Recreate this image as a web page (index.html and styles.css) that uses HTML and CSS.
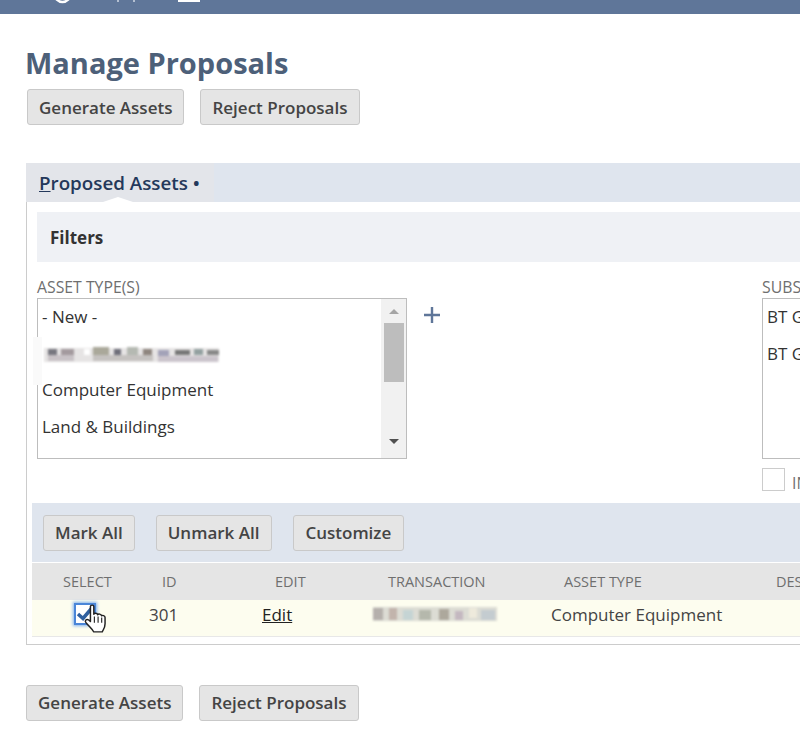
FILE: index.html
```html
<!DOCTYPE html>
<html lang="en">
<head>
    <meta charset="UTF-8">
    <meta name="viewport" content="width=device-width, initial-scale=1.0">
    <title>Manage Proposals</title>
    <link rel="stylesheet" href="styles.css">
</head>
<body>
<div class="topbar">
    <svg class="topbar-icons" width="160" height="14" viewBox="0 0 160 14">
        <circle cx="22.500" cy="-6" r="8" fill="none" stroke="#fff" stroke-width="2.500"/>
        <path d="M78 -2V2M94 -2V2" stroke="#cfd8e4" stroke-width="1.500" fill="none"/>
        <rect x="138" y="-8" width="22" height="10" fill="#fff"/>
    </svg>
</div>

<div class="page">
    <h1>Manage Proposals</h1>
    <div class="btn-row">
        <button class="btn">Generate Assets</button>
        <button class="btn">Reject Proposals</button>
    </div>

    <div class="tabs">
        <div class="tab"><u>P</u>roposed Assets •</div>
    </div>

    <div class="panel">
        <div class="filters-title">Filters</div>

        <div class="filters">
            <div class="field">
                <label>ASSET TYPE(S)</label>
                <div class="field-row">
                    <div class="listbox">
                        <div class="option">- New -</div>
                        <div class="option">
                            <!-- blurred out in the original -->
                            <svg class="mosaic" width="188" height="18" viewBox="0 0 184 18" shape-rendering="crispEdges">
                                <rect x="5" y="2" width="175" height="14" fill="#e6e4e4"/>
                                <rect x="9" y="3" width="9" height="6" fill="#77777f"/>
                                <rect x="22" y="3" width="13" height="6" fill="#a39a9e"/>
                                <rect x="45" y="3" width="6" height="6" fill="#fff"/>
                                <rect x="54" y="1" width="16" height="8" fill="#aaa89a"/>
                                <rect x="75" y="3" width="7" height="6" fill="#6f6f7a"/>
                                <rect x="88" y="1" width="11" height="8" fill="#b5b9b2"/>
                                <rect x="104" y="3" width="9" height="6" fill="#8f867f"/>
                                <rect x="119" y="4" width="11" height="7" fill="#a3a2b8"/>
                                <rect x="136" y="4" width="15" height="5" fill="#777"/>
                                <rect x="155" y="3" width="9" height="6" fill="#93a0a0"/>
                                <rect x="168" y="4" width="12" height="5" fill="#888"/>
                                <rect x="9" y="9" width="26" height="6" fill="#c8c2c6"/>
                                <rect x="54" y="9" width="60" height="6" fill="#c5c2c0"/>
                                <rect x="119" y="10" width="60" height="6" fill="#cbc4cc"/>
                            </svg>
                        </div>
                        <div class="option">Computer Equipment</div>
                        <div class="option">Land &amp; Buildings</div>
                        <div class="option">Leasehold</div>
                        <div class="scrollbar">
                            <span class="arrow-up"></span>
                            <span class="thumb"></span>
                            <span class="arrow-down"></span>
                        </div>
                    </div>
                    <svg class="plus" width="18" height="18" viewBox="0 0 18 18">
                        <path d="M9 1V17M1 9H17" stroke="#5f7699" stroke-width="2.400"/>
                    </svg>
                    <span class="smudge"></span>
                </div>
            </div>

            <div class="field field-subs">
                <label>SUBSIDIARY</label>
                <div class="listbox listbox-subs">
                    <div class="option">BT Global</div>
                    <div class="option">BT Global</div>
                </div>
                <div class="include">
                    <span class="checkbox"></span>
                    <span class="include-label">INCLUDE CHILDREN</span>
                </div>
            </div>
        </div>

        <div class="list-bar">
            <button class="btn">Mark All</button>
            <button class="btn">Unmark All</button>
            <button class="btn">Customize</button>
        </div>

        <div class="grid grid-head">
            <div class="col-select">SELECT</div>
            <div class="col-id">ID</div>
            <div class="col-edit">EDIT</div>
            <div class="col-trans">TRANSACTION</div>
            <div class="col-type">ASSET TYPE</div>
            <div class="col-desc">DESCRIPTION</div>
        </div>
        <div class="grid grid-row">
            <div class="col-select">
                <span class="select-box">
                    <svg width="18" height="15" viewBox="0 0 18 15">
                        <path d="M2 8L7 12.500L15.500 2.500" fill="none" stroke="#2f5f9f" stroke-width="3.500"/>
                    </svg>
                    <svg class="hand" width="27" height="31" viewBox="0 0 24 30" preserveAspectRatio="none">
                        <path d="M7.500 3.500C7.500 1.500 10.500 1.500 10.500 3.500V11C11 9.500 13.500 9.500 14 11.500C14.500 10 17 10.500 17.500 12.500C18 11.500 20.500 12 20.500 14V20C20.500 24 19 25.500 18 28H10.500C9 25 6.500 23 3.500 19C2 17 4 15 6 16.500L7.500 18Z" fill="#fff" stroke="#222" stroke-width="1.300" stroke-linejoin="round"/>
                        <path d="M11 13V19M14.300 13V19M17.500 14V19" stroke="#222" stroke-width="1" fill="none"/>
                    </svg>
                </span>
            </div>
            <div class="col-id">301</div>
            <div class="col-edit"><a href="#">Edit</a></div>
            <div class="col-trans">
                <svg class="mosaic" width="124" height="18" viewBox="0 0 124 18" shape-rendering="crispEdges">
                    <rect x="0" y="2" width="124" height="14" fill="#dcdcd4"/>
                    <rect x="0" y="3" width="10" height="12" fill="#b5b0ac"/>
                    <rect x="16" y="3" width="8" height="12" fill="#c2b4ac"/>
                    <rect x="30" y="5" width="10" height="10" fill="#c5d4d4"/>
                    <rect x="46" y="5" width="12" height="10" fill="#b5b8ac"/>
                    <rect x="66" y="4" width="10" height="11" fill="#ada89c"/>
                    <rect x="82" y="6" width="8" height="9" fill="#c4b8c0"/>
                    <rect x="96" y="3" width="8" height="10" fill="#eeeadc"/>
                    <rect x="108" y="5" width="14" height="10" fill="#c4ccd0"/>
                </svg>
            </div>
            <div class="col-type">Computer Equipment</div>
            <div class="col-desc"></div>
        </div>
    </div>

    <div class="btn-row btn-row-bottom">
        <button class="btn">Generate Assets</button>
        <button class="btn">Reject Proposals</button>
    </div>
</div>
</body>
</html>
```

FILE: styles.css
```css
html, body {
    margin: 0;
    padding: 0;
    height: 755px;
    overflow: hidden;
    background: #fff;
}
body {
    font-family: "Open Sans", sans-serif;
    font-size: 17px;
    color: #333;
}
.topbar {
    height: 14px;
    background: #5f7699;
    padding-left: 40px;
}
.topbar-icons {
    display: block;
}
.page {
    padding-left: 26px;
    width: 774px;
}
h1 {
    margin: 0 0 0 -1px;
    padding-top: 30px;
    font-size: 29px;
    line-height: 38px;
    font-weight: 700;
    color: #4d6079;
}
.btn {
    height: 36px;
    padding: 0 11px;
    font-family: "Open Sans", sans-serif;
    font-size: 17px;
    font-weight: 600;
    color: #444;
    background: #e5e5e5;
    border: 1px solid #c9c9c9;
    border-radius: 3px;
    white-space: nowrap;
}
.btn-row {
    display: flex;
    gap: 16px;
    padding: 7px 0 0 1px;
}
.btn-row-bottom {
    padding: 40px 0 0;
}
.btn-row-bottom .btn, .list-bar .btn {
    padding-bottom: 2px;
}
.tabs {
    margin-top: 38px;
    height: 39px;
    background: #dfe5ee;
    display: flex;
}
.tab {
    width: 174px;
    padding: 1px 0 0 14px;
    background: #e3e5ea;
    font-size: 18.800px;
    font-weight: 600;
    line-height: 38px;
    color: #24385b;
    position: relative;
    text-indent: -1px;
}
/* small white notch under the tab */
.tab::after {
    content: "";
    position: absolute;
    left: 77px;
    bottom: 0;
    border: 15px solid transparent;
    border-top: 0;
    border-bottom: 5px solid #fff;
}
.panel {
    box-sizing: border-box;
    width: 800px;
    height: 443px;
    padding: 10px 0 0 5px;
    border: 1px solid #ccc;
    border-top: 0;
}
.filters-title {
    box-sizing: border-box;
    margin-left: 5px;
    height: 50px;
    padding: 1px 0 0 13px;
    background: #eff1f5;
    font-size: 17px;
    font-weight: 700;
    line-height: 50px;
    color: #333;
}
.filters {
    display: flex;
    height: 241px;
    padding: 15px 0 0 5px;
    box-sizing: border-box;
}
.field label {
    display: block;
    font-size: 15.800px;
    line-height: 21px;
    color: #6f6f6f;
}
.field-row {
    display: flex;
    gap: 16px;
    position: relative;
}
.field-subs {
    margin-left: 321px;
}
.listbox {
    box-sizing: border-box;
    position: relative;
    width: 370px;
    height: 161px;
    border: 1px solid #bdbdbd;
    overflow: hidden;
    padding-left: 4px;
}
.listbox-subs {
    width: 300px;
}
.option {
    height: 36.700px;
    font-size: 17px;
    line-height: 36px;
    color: #333;
    white-space: nowrap;
}
.mosaic {
    display: block;
    filter: blur(1px);
}
.option .mosaic {
    margin: 0 0 0 -5px;
    padding-top: 10px;
}
/* pale edge left over from the blurred row */
.smudge {
    position: absolute;
    left: -4px;
    top: 39px;
    width: 9px;
    height: 48px;
    background: #fafafa;
}
.scrollbar {
    position: absolute;
    top: 0;
    right: 0;
    bottom: 0;
    width: 25px;
    background: #f1f1f1;
    display: flex;
    flex-direction: column;
    align-items: center;
}
.arrow-up, .arrow-down {
    width: 0;
    height: 0;
    border-left: 5px solid transparent;
    border-right: 5px solid transparent;
}
.arrow-up {
    margin-top: 10px;
    border-bottom: 5px solid #a5a5a5;
}
.thumb {
    width: 20px;
    height: 59px;
    margin-top: 9px;
    background: #bdbdbd;
}
.arrow-down {
    margin-top: 57px;
    border-top: 5px solid #505050;
}
.plus {
    margin-top: 8px;
}
.include {
    display: flex;
    gap: 7px;
    margin-top: 9px;
}
.checkbox {
    width: 21px;
    height: 21px;
    border: 1px solid #ccc;
}
.include-label {
    font-size: 15.800px;
    line-height: 21px;
    padding-top: 5px;
    color: #6f6f6f;
    white-space: nowrap;
}
.list-bar {
    display: flex;
    gap: 21px;
    height: 59px;
    padding: 12px 0 0 11px;
    box-sizing: border-box;
    background: #dfe5ee;
}
.list-bar .btn:nth-child(2) {
    padding-right: 12px;
}
.list-bar .btn:last-child {
    padding-right: 12px;
}
.grid {
    display: flex;
    align-items: center;
    white-space: nowrap;
}
.grid > div {
    flex: none;
    box-sizing: border-box;
}
.grid-head {
    margin-top: 1px;
    height: 37px;
    background: #e5e5e5;
    font-size: 14.500px;
    color: #6f6f6f;
}
.grid-head > div {
    padding-left: 13px;
}
.grid-head .col-trans {
    padding-left: 15px;
}
.grid-row {
    box-sizing: border-box;
    height: 37px;
    padding-bottom: 8px;
    background: #fdfdef;
    border-bottom: 1px solid #e8e8e8;
    font-size: 17px;
    color: #444;
}
.col-select {
    width: 117px;
}
.grid-head .col-select {
    padding-left: 31px;
}
.grid-row .col-select {
    padding-left: 42px;
}
.col-id {
    width: 113px;
}
.col-edit {
    width: 111px;
}
.col-trans {
    width: 178px;
}
.col-type {
    width: 212px;
}
.col-desc {
    width: 60px;
}
.col-edit a {
    color: #222;
}
.select-box {
    display: block;
    box-sizing: border-box;
    position: relative;
    width: 22px;
    height: 22px;
    background: #fff;
    border: 2px solid #4a86d8;
    box-shadow: 0 0 3px 1px #7fb0ee;
}
.select-box svg {
    display: block;
    margin-top: 1px;
}
.select-box .hand {
    position: absolute;
    left: 6px;
    top: -2px;
    margin: 0;
}
```
